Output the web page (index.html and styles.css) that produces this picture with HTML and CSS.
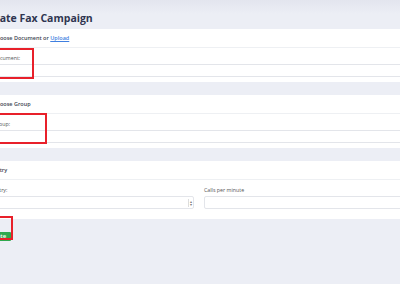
FILE: index.html
```html
<!DOCTYPE html>
<html lang="en">
<head>
  <meta charset="UTF-8">
  <title>Create Fax Campaign</title>
  <link rel="stylesheet" href="styles.css">
</head>
<body>
  <div id="page">
    <h1 class="title">Create Fax Campaign</h1>

    <div class="card">
      <div class="card-head">Choose Document or <a href="#">Upload</a></div>
      <div class="card-body">
        <label class="lbl">Document:</label>
        <div class="field"></div>
      </div>
    </div>

    <div class="card">
      <div class="card-head">Choose Group</div>
      <div class="card-body">
        <label class="lbl">Group:</label>
        <div class="field"></div>
      </div>
    </div>

    <div class="card">
      <div class="card-head">Retry</div>
      <div class="card-body card-body-big">
        <div class="cols">
          <div>
            <label class="lbl">Retry:</label>
            <div class="field field-spin"><span class="spin">&#9652;<br>&#9662;</span></div>
          </div>
          <div>
            <label class="lbl">Calls per minute</label>
            <div class="field"></div>
          </div>
        </div>
      </div>
    </div>

    <div class="btn-row">
      <div class="btn">Create</div>
    </div>

    <!-- red marks drawn over the shot -->
    <div class="mark mark1"></div>
    <div class="mark mark2"></div>
    <div class="mark mark3"></div>
  </div>
</body>
</html>
```

FILE: styles.css
```css
html, body {
  margin: 0;
  padding: 0;
  overflow: hidden;
  width: 100%;
  height: 100%;
  background: linear-gradient(#e3e5ee 0px, #eceef5 14px, #eceef5 100%);
  font-family: "Open Sans", "Liberation Sans", sans-serif;
  color: #444;
}
#page {
  position: relative;
  width: 434px;
  margin-left: -18px;
}
.title {
  margin: 0;
  height: 29px;
  font-size: 10.5px;
  line-height: 36px;
  font-weight: 700;
  color: #2f3550;
  white-space: nowrap;
}
.card {
  background-color: #fff;
  margin-bottom: 13px;
}
.card-head {
  height: 18px;
  line-height: 19px;
  padding: 0 11px;
  font-size: 5.5px;
  font-weight: 600;
  color: #3a3f4f;
  border-bottom: 1px solid #eef0f3;
}
.card-head a {
  color: #3f7fe0;
  text-decoration: underline;
}
.card-body {
  padding: 5px 11px 5px;
}
.card-body-big {
  padding-bottom: 10px;
}
.lbl {
  display: block;
  height: 10px;
  line-height: 10px;
  margin-bottom: 1px;
  font-size: 5.3px;
  color: #555;
}
.field {
  height: 11px;
  border: 1px solid #e3e5ea;
  border-radius: 2px;
  background-color: #fff;
  display: flex;
  justify-content: flex-end;
  align-items: center;
}
.spin {
  font-size: 4px;
  line-height: 3px;
  color: #777;
  margin-right: 1px;
  padding: 1px 0 1px 1px;
  border-left: 1px solid #ddd;
}
.cols {
  display: grid;
  grid-template-columns: 1fr 1fr;
  gap: 10px;
}
.btn-row {
  display: flex;
}
.btn {
  height: 9px;
  line-height: 9px;
  padding: 0 5px;
  font-size: 6px;
  font-weight: 600;
  color: #fff;
  background-color: #2fa84f;
  border-radius: 1px;
}
.mark {
  position: absolute;
  border: 2px solid #e8202a;
  box-sizing: border-box;
}
.mark1 { left: 8px; width: 44px; top: 48px; height: 31px; }
.mark2 { left: 8px; width: 57px; top: 113px; height: 31px; }
.mark3 { left: 8px; width: 23px; top: 216px; height: 24px; }
```
